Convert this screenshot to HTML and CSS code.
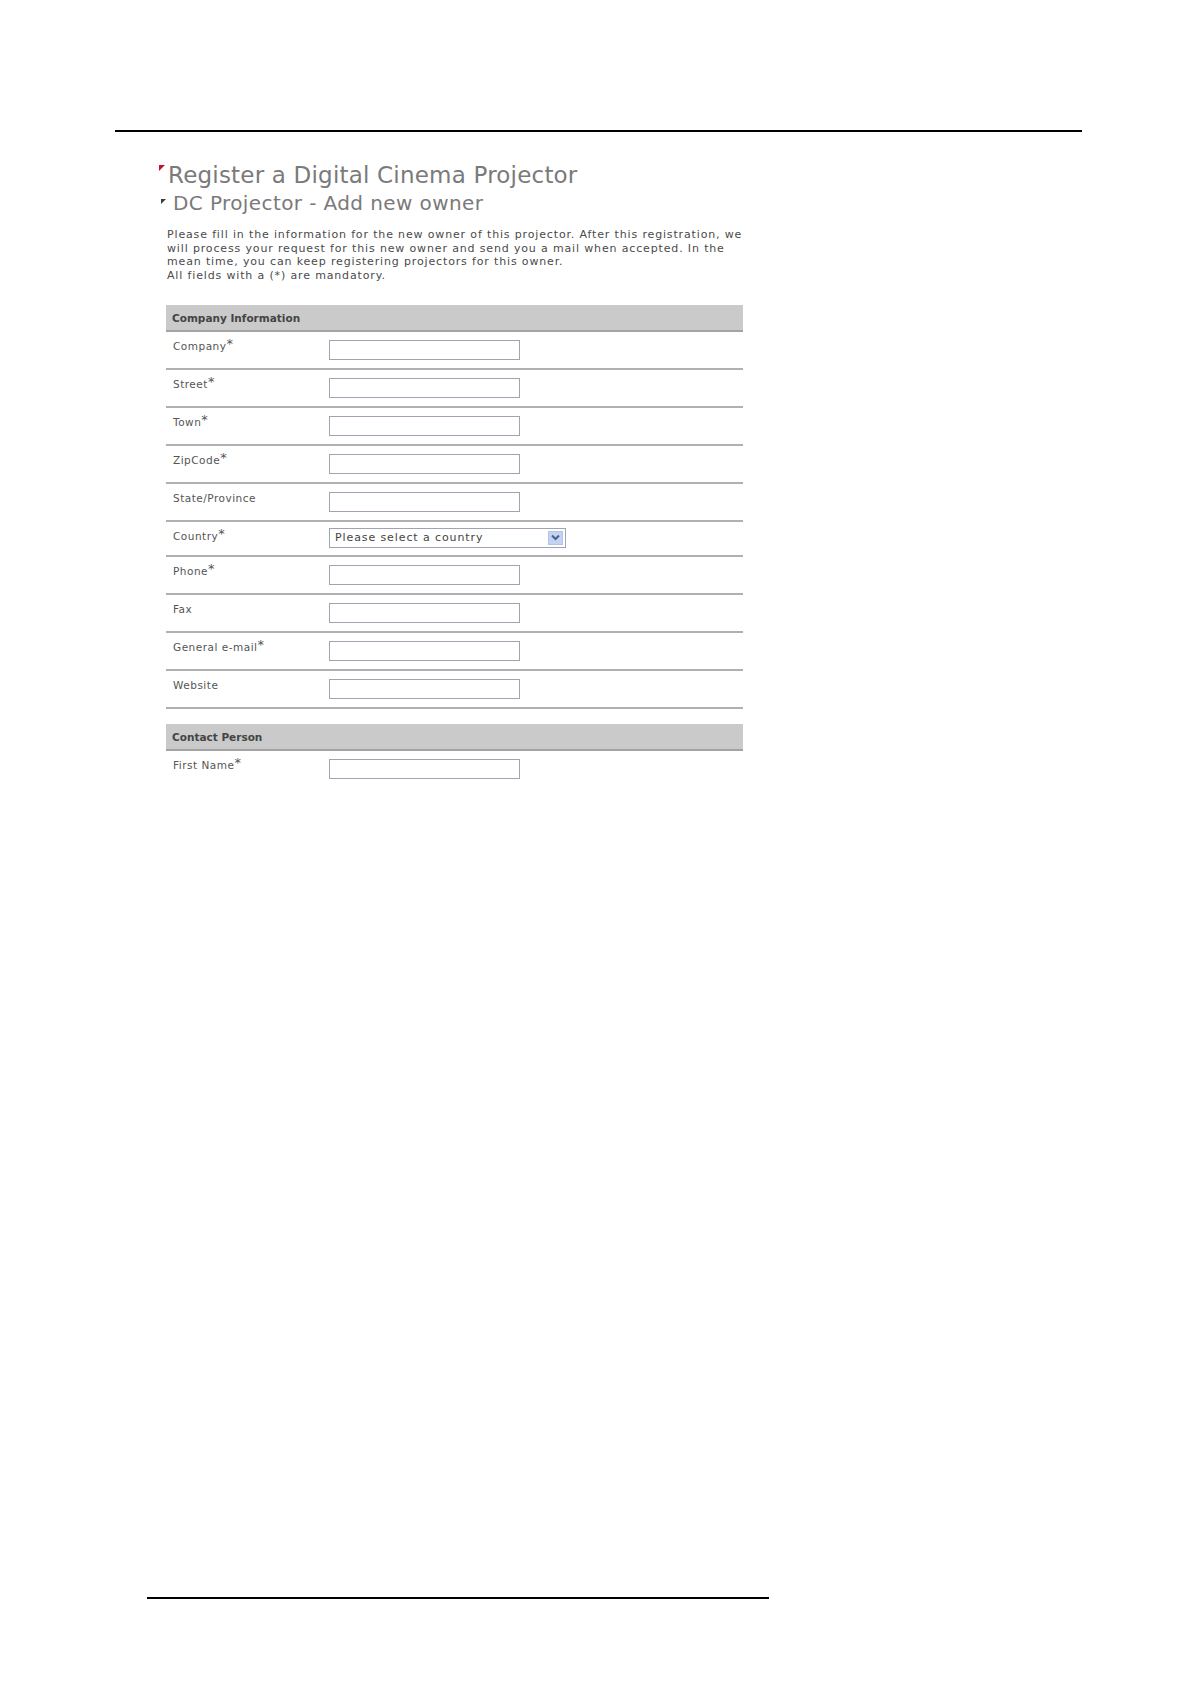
FILE: index.html
```html
<!DOCTYPE html>
<html>
<head>
<meta charset="utf-8">
<link rel="stylesheet" href="styles.css">
</head>
<body>
<div class="top-rule"></div>
<main class="content">
  <h1 class="title"><span class="mark mark-red"></span>Register a Digital Cinema Projector</h1>
  <h2 class="subtitle"><span class="mark mark-grey"></span>DC Projector - Add new owner</h2>
  <p class="intro">Please fill in the information for the new owner of this projector. After this registration, we<br>will process your request for this new owner and send you a mail when accepted. In the<br>mean time, you can keep registering projectors for this owner.<br>All fields with a (*) are mandatory.</p>

  <section class="form-table">
    <div class="section-head">Company Information</div>
    <div class="row"><div class="label">Company<sup>*</sup></div><div class="field"><span class="input"></span></div></div>
    <div class="row"><div class="label">Street<sup>*</sup></div><div class="field"><span class="input"></span></div></div>
    <div class="row"><div class="label">Town<sup>*</sup></div><div class="field"><span class="input"></span></div></div>
    <div class="row"><div class="label">ZipCode<sup>*</sup></div><div class="field"><span class="input"></span></div></div>
    <div class="row"><div class="label">State/Province</div><div class="field"><span class="input"></span></div></div>
    <div class="row row-short"><div class="label">Country<sup>*</sup></div><div class="field"><span class="select"><span class="select-text">Please select a country</span><span class="select-btn"><svg width="9" height="7" viewBox="0 0 9 7"><path d="M1 1.5 L4.5 5 L8 1.5" fill="none" stroke="#4d6185" stroke-width="2"/></svg></span></span></div></div>
    <div class="row"><div class="label">Phone<sup>*</sup></div><div class="field"><span class="input"></span></div></div>
    <div class="row"><div class="label">Fax</div><div class="field"><span class="input"></span></div></div>
    <div class="row"><div class="label">General e-mail<sup>*</sup></div><div class="field"><span class="input"></span></div></div>
    <div class="row"><div class="label">Website</div><div class="field"><span class="input"></span></div></div>
  </section>

  <section class="form-table contact">
    <div class="section-head">Contact Person</div>
    <div class="row row-open"><div class="label">First Name<sup>*</sup></div><div class="field"><span class="input"></span></div></div>
  </section>
</main>
<div class="bottom-rule"></div>
</body>
</html>
```

FILE: styles.css
```css
html, body {
  margin: 0;
  padding: 0;
  background: #ffffff;
}
body {
  width: 1190px;
  min-height: 1684px;
  font-family: "DejaVu Sans", Verdana, sans-serif;
  color: #555;
}
.top-rule {
  margin: 130px 0 0 115px;
  width: 967px;
  height: 2px;
  background: #000;
}
.content {
  margin-left: 166px;
  width: 577px;
  min-height: 1436px;
}
.title {
  position: relative;
  margin: 29px 0 0 0;
  padding-left: 2px;
  font-size: 23px;
  line-height: 28px;
  font-weight: normal;
  color: #7a7a7a;
  letter-spacing: 0.2px;
}
.subtitle {
  position: relative;
  margin: 1px 0 0 0;
  padding-left: 7px;
  font-size: 20px;
  line-height: 26px;
  font-weight: normal;
  color: #7a7a7a;
  letter-spacing: 0.4px;
}
.mark {
  position: absolute;
  width: 0;
  height: 0;
  border-style: solid;
}
.mark-red {
  left: -7px;
  top: 4px;
  border-width: 6px 6px 0 0;
  border-color: #c8102e transparent transparent transparent;
}
.mark-grey {
  left: -5px;
  top: 9px;
  border-width: 5px 5px 0 0;
  border-color: #3a3a3a transparent transparent transparent;
}
.intro {
  margin: 12px 0 0 1px;
  font-size: 11px;
  line-height: 13.7px;
  color: #4a4a4a;
  letter-spacing: 0.85px;
  white-space: nowrap;
}
.form-table {
  margin-top: 22px;
}
.section-head {
  height: 25px;
  line-height: 26px;
  background: #c9cac9;
  border-bottom: 2px solid #a3a3a3;
  padding-left: 6px;
  font-size: 10.5px;
  font-weight: bold;
  color: #444;
}
.row {
  display: grid;
  grid-template-columns: 163px 1fr;
  height: 36px;
  border-bottom: 2px solid #b0b0b0;
}
.row-short {
  height: 33.5px;
}
.row-open {
  border-bottom: none;
}
.label {
  padding: 8px 0 0 7px;
  font-size: 10.5px;
  line-height: 13px;
  color: #555;
  letter-spacing: 0.5px;
}
.label sup {
  font-size: 13px;
  line-height: 0;
  vertical-align: 2px;
  letter-spacing: 0;
  color: #555;
}
.field {
  padding-top: 8px;
}
.row-short .field {
  padding-top: 6px;
}
.input {
  display: block;
  width: 189px;
  height: 18px;
  border: 1px solid #9ea5b0;
  background: #fff;
}
.select {
  display: flex;
  align-items: center;
  justify-content: space-between;
  width: 235px;
  height: 18px;
  border: 1px solid #9ea5b0;
  background: #fff;
}
.select-text {
  padding-left: 5px;
  font-size: 11px;
  color: #444;
  letter-spacing: 0.9px;
}
.select-btn {
  display: flex;
  align-items: center;
  justify-content: center;
  width: 15px;
  height: 14px;
  margin-right: 2px;
  background: #c3d3f3;
  border: 1px solid #b1c3e8;
  box-sizing: border-box;
}
.contact {
  margin-top: 15px;
}
.bottom-rule {
  margin: 0 0 0 147px;
  width: 622px;
  height: 2px;
  background: #000;
}
```
